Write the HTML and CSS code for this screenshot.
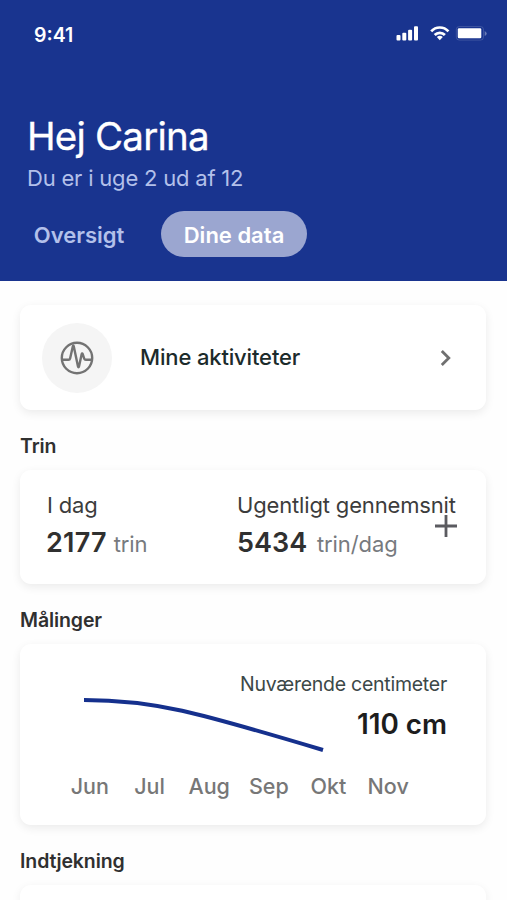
FILE: index.html
```html
<!DOCTYPE html>
<html lang="da">
  <head>
    <meta charset="UTF-8" />
    <meta name="viewport" content="width=device-width, initial-scale=1.0" />
    <title>Dine data</title>
    <link rel="stylesheet" href="styles.css" />
  </head>
  <body>
    <header class="header">
      <div class="status-bar">
        <span class="time">9:41</span>
        <svg class="status-icons" width="92" height="20" viewBox="0 0 92 20">
          <g fill="#fff">
            <rect x="1.5" y="11" width="4" height="5.5" rx="1" />
            <rect x="7.3" y="8.7" width="4" height="7.8" rx="1" />
            <rect x="13.1" y="5.7" width="4" height="10.8" rx="1" />
            <rect x="19" y="2.3" width="4" height="14.2" rx="1" />
            <rect x="62.8" y="4.3" width="23.5" height="10" rx="1.2" />
          </g>
          <g fill="none" stroke="#fff" stroke-width="2.7">
            <path d="M36.2 7.3a11.6 11.6 0 0 1 17.2 0" />
            <path d="M39.7 11a7.1 7.1 0 0 1 10.2 0" />
          </g>
          <path d="M41.8 13.1a4.6 4.6 0 0 1 6 0l-3 3.2z" fill="#fff" />
          <rect x="61.3" y="2.5" width="27.2" height="13.6" rx="3" fill="none" stroke="#fff" opacity=".15" />
          <path d="M89.7 7v5q2-1 2-2.5t-2-2.5" fill="#fff" opacity=".35" />
        </svg>
      </div>
      <h1 class="title">Hej Carina</h1>
      <p class="subtitle">Du er i uge 2 ud af 12</p>
      <nav class="tabs">
        <a class="tab">Oversigt</a>
        <a class="tab active">Dine data</a>
      </nav>
    </header>

    <main class="content">
      <section class="card activities">
        <div class="icon-circle">
          <svg width="34" height="34" viewBox="0 0 34 34" fill="none" stroke="#737373" stroke-width="2.4" stroke-linejoin="round">
            <circle cx="17" cy="17" r="15.2" />
            <path d="M2 18.8h6.5q1.300 0 1.600-1.400l2.700-12q.5-1.800 1 0l4.200 20q.5 1.800 1 0l2.600-12q.5-1.600 1.100-.3l1.500 4.500q.4 1.200 1.600 1.200h6.200" />
          </svg>
        </div>
        <span class="activities-label">Mine aktiviteter</span>
        <svg class="chevron" width="12" height="18" viewBox="0 0 12 18" fill="none" stroke="#707070" stroke-width="2.8">
          <path d="M1.8 2l7 7-7 7" />
        </svg>
      </section>

      <h2 class="heading">Trin</h2>
      <section class="card steps">
        <div class="stat today">
          <p class="stat-label">I dag</p>
          <p class="stat-value">2177 <span class="unit">trin</span></p>
        </div>
        <div class="stat weekly">
          <p class="stat-label">Ugentligt gennemsnit</p>
          <p class="stat-value">5434 <span class="unit">trin/dag</span></p>
        </div>
        <svg class="plus" width="24" height="24" viewBox="0 0 24 24" stroke="#5b5b60" stroke-width="2.8">
          <path d="M12 1v22M1 12h22" />
        </svg>
      </section>

      <h2 class="heading">Målinger</h2>
      <section class="card measurements">
        <svg class="chart" width="242" height="56" viewBox="0 0 242 56" fill="none" stroke="#15308d" stroke-width="4">
          <path d="M0 3C70 3 112 15 239 53" />
        </svg>
        <div class="current">
          <p class="current-label">Nuværende centimeter</p>
          <p class="current-value">110 cm</p>
        </div>
        <div class="months">
          <span>Jun</span>
          <span>Jul</span>
          <span>Aug</span>
          <span>Sep</span>
          <span>Okt</span>
          <span>Nov</span>
        </div>
      </section>

      <h2 class="heading">Indtjekning</h2>
      <section class="card checkin"></section>
    </main>
  </body>
</html>
```

FILE: styles.css
```css
* {
  box-sizing: border-box;
}

body {
  margin: 0;
  height: 900px;
  overflow: hidden;
  background: #fefefe;
  color: #303030;
  font-family: Inter, "Liberation Sans", sans-serif;
}

h1,
h2,
p {
  margin: 0;
}

/* Header */
.header {
  height: 281px;
  background: #19348f;
  color: #fff;
}

.status-bar {
  height: 68px;
  padding: 0 20px 0 34px;
  display: flex;
  align-items: center;
  justify-content: space-between;
}

.time {
  padding-top: 1px;
  font-size: 19.5px;
  font-weight: 600;
}

.title {
  padding: 46px 27px 0;
  font-size: 38.5px;
  font-weight: 400;
  line-height: 44px;
  letter-spacing: -0.8px;
  -webkit-text-stroke: 0.3px #fff;
}

.subtitle {
  padding: 5px 27px 0;
  color: #b3c0ea;
  font-size: 22px;
  line-height: 30px;
  letter-spacing: -0.2px;
}

.tabs {
  display: flex;
  gap: 15px;
  padding: 18px 12px 0;
}

.tab {
  width: 134px;
  height: 46px;
  line-height: 48px;
  text-align: center;
  color: #b3c0ea;
  font-size: 22px;
  font-weight: 600;
}

.tab.active {
  width: 146px;
  border-radius: 23px;
  background: #9ba6d0;
  color: #fff;
}

/* Cards */
.content {
  height: 619px;
  padding: 24px 21px 0 20px;
  overflow: hidden;
}

.card {
  border-radius: 11px;
  background: #fff;
  box-shadow: 0 3px 10px rgba(0, 0, 0, 0.08);
}

.heading {
  height: 60px;
  padding-top: 12px;
  line-height: 48px;
  font-size: 19.5px;
  font-weight: 600;
  letter-spacing: -0.1px;
}

.activities {
  height: 105px;
  padding: 0 34px 0 22px;
  display: flex;
  align-items: center;
}

.icon-circle {
  width: 70px;
  height: 70px;
  display: flex;
  align-items: center;
  justify-content: center;
  border-radius: 50%;
  background: #f5f5f5;
}

.activities-label {
  margin-left: 28px;
  padding-bottom: 2px;
  color: #1c2b2b;
  font-size: 22px;
  font-weight: 500;
  letter-spacing: -0.15px;
}

.chevron {
  margin-left: auto;
}

.steps {
  position: relative;
  height: 114px;
  padding: 20px 0 0 27px;
  display: flex;
}

.today {
  width: 190px;
}

.stat-label {
  font-size: 22px;
  line-height: 30px;
  color: #3c3c3c;
  letter-spacing: -0.16px;
  white-space: nowrap;
}

.stat-value {
  font-size: 27px;
  font-weight: 600;
  line-height: 46px;
  white-space: nowrap;
}

.today .stat-value {
  margin-left: -1px;
  letter-spacing: 0.2px;
}

.unit {
  color: #777a7e;
  font-size: 22px;
  font-weight: 400;
  letter-spacing: -0.1px;
}

.weekly .unit {
  margin-left: 3px;
}

/* sits over the end of the weekly label */
.plus {
  position: absolute;
  top: 44px;
  right: 28px;
}

.measurements {
  height: 181px;
  padding: 27px 39px 0 40px;
  display: grid;
  grid-template-columns: 170px 217px;
  grid-template-rows: 97px 34px;
}

.chart {
  grid-area: 1 / 1;
  margin: 26px 0 0 24px;
}

.current {
  grid-area: 1 / 2;
  text-align: right;
  white-space: nowrap;
}

.current-label {
  color: #3c4848;
  font-size: 19.5px;
  line-height: 26px;
  letter-spacing: -0.26px;
}

.current-value {
  margin-top: 6px;
  color: #1d1d1d;
  font-size: 27.8px;
  font-weight: 600;
  line-height: 43px;
}

.months {
  grid-column: 1 / 3;
  width: 358px;
  display: grid;
  grid-template-columns: repeat(6, 1fr);
  text-align: center;
  color: #777;
  font-size: 21.5px;
  font-weight: 500;
  line-height: 36px;
}

.checkin {
  height: 15px;
  border-radius: 11px 11px 0 0;
}
```
